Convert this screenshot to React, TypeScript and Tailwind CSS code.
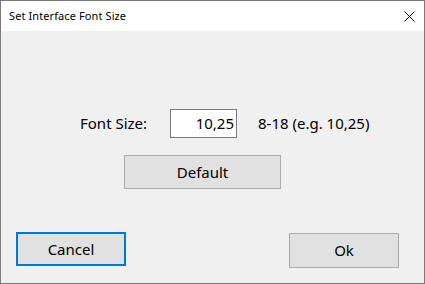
export default function App() {
  const ui = { fontFamily: '"Noto Sans", "Open Sans", sans-serif' };
  return (
    <div
      className="w-[425px] h-[284px] flex flex-col border border-[#7a7a7a] bg-[#f0f0f0] text-black"
      style={ui}
    >
      {/* title bar */}
      <div className="h-[30px] bg-white flex items-center justify-between pl-[8px] pr-[9px]">
        <span className="text-[11px] tracking-[0.1px]">Set Interface Font Size</span>
        <svg width="11" height="11" viewBox="0 0 11 11" className="mt-[1px]">
          <path d="M0.5 0.5 L10.5 10.5 M10.5 0.5 L0.5 10.5" stroke="#000" strokeWidth="1" />
        </svg>
      </div>

      {/* body */}
      <div className="flex-1 flex flex-col pt-[78px]">
        <div className="flex items-center h-[29px] pl-[79px]">
          <span className="text-[15px] w-[90px]">Font Size:</span>
          <div className="w-[67px] h-[29px] border border-[#7a7a7a] bg-white flex items-center justify-end pr-[2px] text-[15px]">
            10,25
          </div>
          <span className="text-[15px] ml-[21px]">8-18 (e.g. 10,25)</span>
        </div>

        <div className="flex pl-[123px] mt-[17px]">
          <button className="w-[157px] h-[34px] bg-[#e1e1e1] border border-[#adadad] text-[15px]">
            Default
          </button>
        </div>

        <div className="flex items-start justify-between pl-[15px] pr-[25px] mt-[43px]">
          <button className="w-[110px] h-[34px] bg-[#e1e1e1] border-2 border-[#0078d7] text-[15px]">
            Cancel
          </button>
          <button className="w-[110px] h-[35px] mt-[1px] bg-[#e1e1e1] border border-[#adadad] text-[15px]">
            Ok
          </button>
        </div>
      </div>
    </div>
  );
}
